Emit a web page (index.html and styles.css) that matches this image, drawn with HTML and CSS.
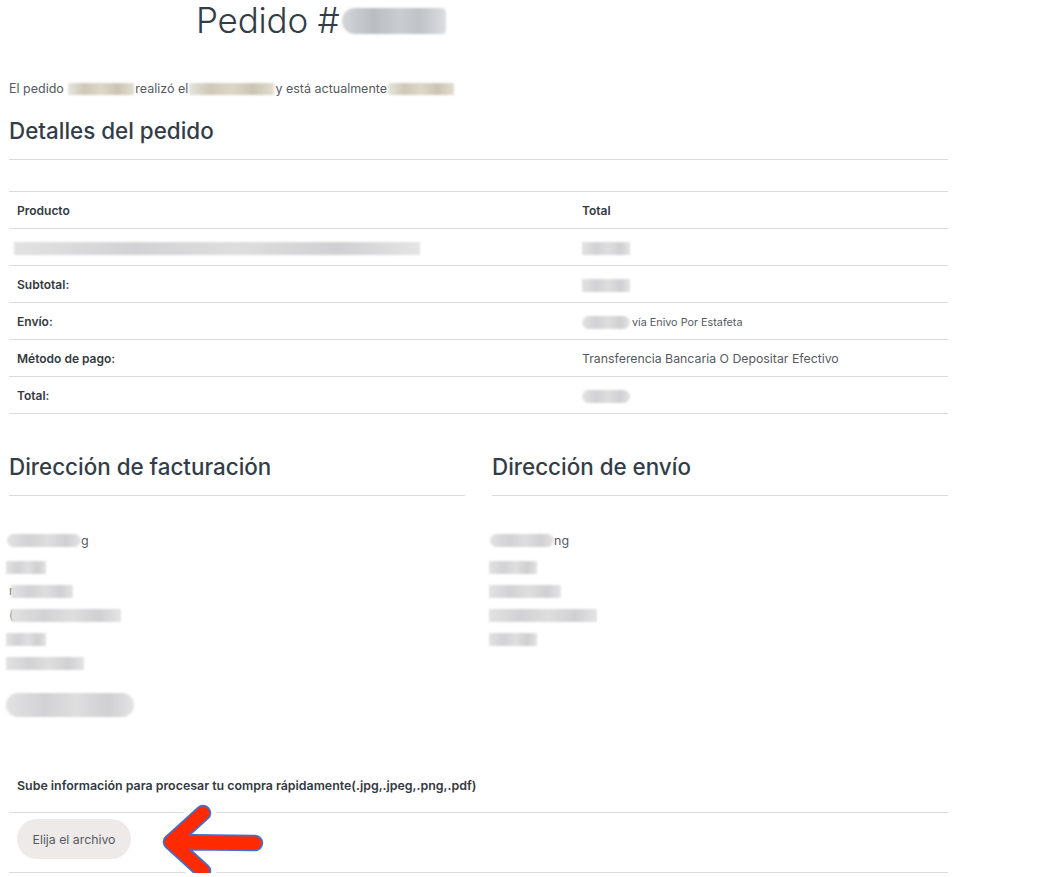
FILE: index.html
```html
<!DOCTYPE html>
<html lang="es">
<head>
<meta charset="utf-8">
<title>Pedido</title>
<link rel="stylesheet" href="styles.css">
</head>
<body>
<div class="page">
  <h1 class="title">Pedido #<span class="blur blur-title"></span></h1>

  <p class="intro">El pedido <span class="blur beige w66"></span>realizó el<span class="blur beige w85"></span>y está actualmente<span class="blur beige w66"></span></p>

  <h2 class="section-title">Detalles del pedido</h2>

  <table class="order">
    <colgroup><col class="c1"><col class="c2"></colgroup>
    <thead>
      <tr><th>Producto</th><th>Total</th></tr>
    </thead>
    <tbody>
      <tr><td><span class="blur gray w406"></span></td><td><span class="blur gray w48"></span></td></tr>
      <tr><th>Subtotal:</th><td><span class="blur gray w48"></span></td></tr>
      <tr><th>Envío:</th><td><span class="blur gray w48 round"></span><span class="small">vía Enivo Por Estafeta</span></td></tr>
      <tr><th>Método de pago:</th><td>Transferencia Bancaria O Depositar Efectivo</td></tr>
      <tr><th>Total:</th><td><span class="blur gray w48 round"></span></td></tr>
    </tbody>
  </table>

  <div class="addresses">
    <section class="address">
      <h2 class="section-title">Dirección de facturación</h2>
      <div class="lines">
        <div class="line"><span class="blur gray w74 round"></span>g</div>
        <div class="line"><span class="blur gray w40"></span></div>
        <div class="line">r<span class="blur gray w62"></span></div>
        <div class="line">(<span class="blur gray w110"></span></div>
        <div class="line"><span class="blur gray w40"></span></div>
        <div class="line"><span class="blur gray w78"></span></div>
        <div class="line phone"><span class="blur gray w128 round tall"></span></div>
      </div>
    </section>
    <section class="address">
      <h2 class="section-title">Dirección de envío</h2>
      <div class="lines">
        <div class="line"><span class="blur gray w64 round"></span>ng</div>
        <div class="line"><span class="blur gray w48"></span></div>
        <div class="line"><span class="blur gray w72"></span></div>
        <div class="line"><span class="blur gray w108"></span></div>
        <div class="line"><span class="blur gray w48"></span></div>
      </div>
    </section>
  </div>

  <div class="upload">
    <div class="upload-label">Sube información para procesar tu compra rápidamente(.jpg,.jpeg,.png,.pdf)</div>
    <div class="upload-row">
      <button class="file-btn" type="button">Elija el archivo</button>
      <svg class="arrow" width="110" height="84" viewBox="0 0 110 84" aria-hidden="true">
        <g fill="none" stroke-linecap="round" stroke-linejoin="round">
          <path d="M44 13 L12 42 L44 71 M12 42 L96 43" stroke="#ffffff" stroke-width="26"/>
          <path d="M44 13 L12 42 L44 71 M12 42 L96 43" stroke="#3f6fd0" stroke-width="16.5"/>
          <path d="M44 13 L12 42 L44 71 M12 42 L96 43" stroke="#ff2a00" stroke-width="13"/>
        </g>
      </svg>
    </div>
  </div>
</div>
</body>
</html>
```

FILE: styles.css
```css
* { box-sizing: border-box; }

html, body {
  margin: 0;
  padding: 0;
  background: #ffffff;
}

body {
  font-family: Inter, "Noto Sans", "Liberation Sans", sans-serif;
  color: #555a5f;
}

.page {
  width: 957px;
  padding: 0 9px;
}

.title {
  margin: 0 0 0 187px;
  font-size: 35px;
  font-weight: 300;
  line-height: 40px;
  color: #333d47;
  letter-spacing: -0.2px;
}

.blur {
  display: inline-block;
  vertical-align: middle;
  filter: blur(1.2px);
}

.blur-title {
  width: 104px;
  height: 26px;
  border-radius: 13px 4px 4px 13px;
  background: linear-gradient(90deg, #d3d6da 0%, #b9bdc2 30%, #c9ccd0 55%, #bfc3c7 75%, #dcdfe2 100%);
  margin-left: 2px;
  margin-top: -4px;
}

.intro {
  margin: 40px 0 0;
  font-size: 12.5px;
  line-height: 18px;
  color: #555a5f;
}

.beige {
  height: 12px;
  background: linear-gradient(90deg, #e5e4df 0%, #cfc8b6 25%, #dcd7c8 50%, #cbc4b2 75%, #e1ddd1 100%);
  margin: -2px 1px 0;
}

.gray {
  height: 13px;
  background: linear-gradient(90deg, #e2e2e3 0%, #d2d2d4 30%, #dededf 55%, #d0d0d2 80%, #e4e4e5 100%);
}

.round { border-radius: 7px; }
.tall { height: 24px; border-radius: 12px; }

.w40 { width: 40px; }
.w48 { width: 48px; }
.w52 { width: 52px; }
.w62 { width: 62px; }
.w64 { width: 64px; }
.w66 { width: 66px; }
.w72 { width: 72px; }
.w74 { width: 74px; }
.w78 { width: 78px; }
.w85 { width: 85px; }
.w106 { width: 106px; }
.w108 { width: 108px; }
.w110 { width: 110px; }
.w128 { width: 128px; }
.w406 { width: 406px; }

.section-title {
  margin: 0;
  font-size: 22.4px;
  font-weight: 500;
  line-height: 28px;
  color: #333d47;
  padding-bottom: 14px;
  border-bottom: 1px solid #dcdcdc;
}

.intro + .section-title { margin-top: 19px; }

.order {
  width: 100%;
  margin-top: 31px;
  border-collapse: collapse;
  border-top: 1px solid #dcdcdc;
  font-size: 12px;
}

.order .c1 { width: 565px; }

.order th,
.order td {
  height: 37px;
  padding: 0 8px;
  text-align: left;
  vertical-align: middle;
  border-bottom: 1px solid #dcdcdc;
}

.order th {
  font-weight: 600;
  color: #333a42;
}

.order td {
  font-weight: 400;
  color: #555a5f;
  font-size: 12.3px;
}

.order tbody tr:first-child td:first-child { padding-left: 5px; }

.small {
  font-size: 10.8px;
  margin-left: 2px;
  vertical-align: middle;
}

.addresses {
  margin-top: 39px;
  display: grid;
  grid-template-columns: 456px 456px;
  column-gap: 27px;
}

.lines {
  padding-top: 38px;
  font-size: 12.5px;
  color: #555a5f;
}

.line {
  height: 24px;
  line-height: 24px;
  display: flex;
  align-items: center;
}

.line:first-child { margin-top: -8px; height: 29px; }

.line .blur { margin-left: -3px; }
.lines .line:first-child .blur { margin-left: -2px; }

.phone {
  margin-top: 15px;
  height: 30px;
}

.upload {
  margin-top: 57px;
}

.upload-label {
  padding: 0 8px;
  font-size: 12.4px;
  font-weight: 600;
  line-height: 18px;
  color: #333a42;
  padding-bottom: 17px;
}

.upload-row {
  position: relative;
  border-top: 1px solid #dcdcdc;
  border-bottom: 1px solid #dcdcdc;
  padding: 6px 8px 13px;
}

.file-btn {
  display: block;
  width: 114px;
  height: 40px;
  border: none;
  border-radius: 20px;
  background: #efeaea;
  font-family: inherit;
  font-size: 12.3px;
  color: #555a5f;
  padding: 0;
}

.arrow {
  position: absolute;
  left: 150px;
  top: -13px;
}
```
